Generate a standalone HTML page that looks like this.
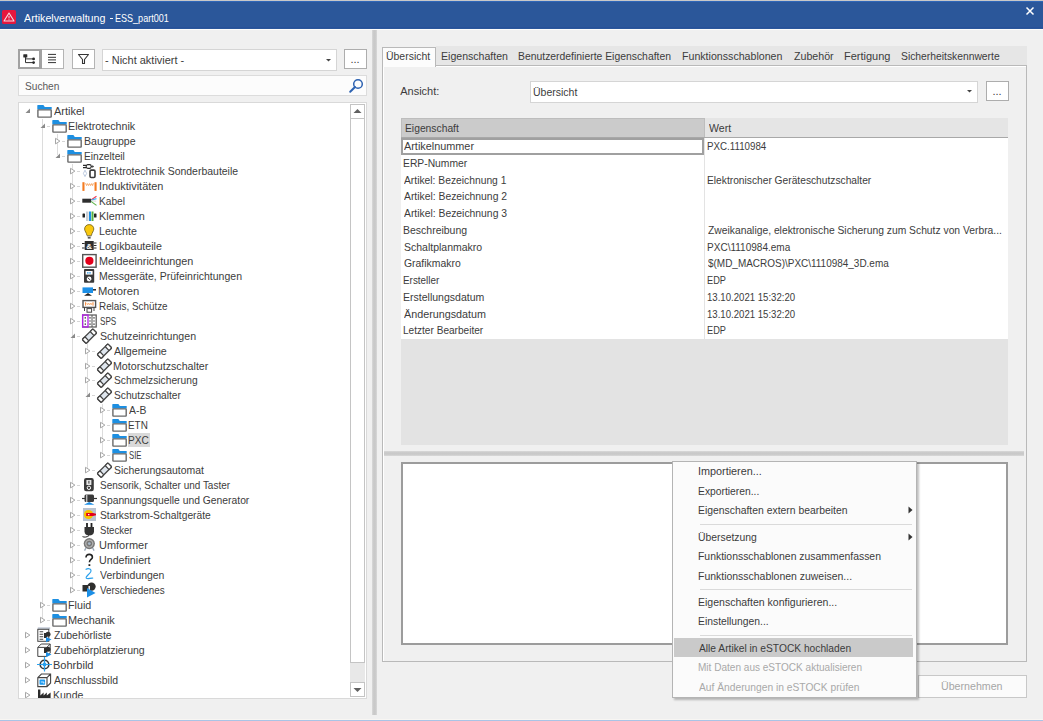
<!DOCTYPE html><html><head><meta charset="utf-8"><style>
*{margin:0;padding:0;box-sizing:border-box}
html,body{width:1043px;height:721px;overflow:hidden;background:#f0f0f0;font-family:"Liberation Sans",sans-serif}
.t{position:absolute;line-height:15px;height:15px;white-space:nowrap;font-size:11px}
svg{position:absolute;overflow:visible}
</style></head><body>
<div style="position:absolute;left:0px;top:0px;width:1043px;height:1px;background:#c8c8c8"></div>
<div style="position:absolute;left:0px;top:1px;width:1043px;height:28px;background:#2b579a"></div>
<div style="position:absolute;left:0px;top:1px;width:1043px;height:1px;background:#2f66b8"></div>
<div style="position:absolute;left:0px;top:27px;width:1043px;height:1px;background:#27519a"></div>
<div style="position:absolute;left:0px;top:29px;width:1043px;height:1px;background:#fdfcfa"></div>
<svg style="left:2px;top:10px" width="15" height="15" viewBox="0 0 15 15"><rect x="0" y="0" width="14" height="14" rx="1.5" fill="#e4173e"/><path d="M7 3 L12 11 L2 11 Z" fill="none" stroke="#f6dbe3" stroke-width="1.1" stroke-linejoin="round"/><path d="M7 5.8 V8.4" stroke="#f6dbe3" stroke-width="1"/><circle cx="7" cy="9.7" r="0.55" fill="#f6dbe3"/></svg>
<div class="t" style="left:23.7px;top:11px;color:#ffffff;letter-spacing:0.0px;font-size:11px;transform:scaleX(0.9726);transform-origin:0 0;">Artikelverwaltung</div>
<div style="position:absolute;left:110px;top:18px;width:2.5px;height:1px;background:#f4f6fa"></div>
<div class="t" style="left:114.88px;top:11px;color:#ffffff;letter-spacing:0.0px;font-size:11px;transform:scaleX(0.8219);transform-origin:0 0;">ESS_part001</div>
<svg style="left:1026px;top:7px" width="8" height="8" viewBox="0 0 8 8"><path d="M0.5 0.5 L7.5 7.5 M7.5 0.5 L0.5 7.5" stroke="#fff" stroke-width="1.5"/></svg>
<div style="position:absolute;left:18px;top:49px;width:24px;height:20px;background:#fff;border:2px solid #a2a2a2;border-right-width:3px"></div>
<svg style="left:22px;top:53px" width="16" height="12" viewBox="0 0 16 12"><rect x="1.3" y="1.2" width="4" height="3.2" rx="0.5" fill="#2a2a2a"/><path d="M3.5 4 V9.6 H11.5 M3.5 5.9 H11.5" stroke="#333" stroke-width="1" fill="none"/><circle cx="11.6" cy="5.9" r="1.4" fill="#2a2a2a"/><circle cx="11.6" cy="9.6" r="1.4" fill="#2a2a2a"/></svg>
<div style="position:absolute;left:42px;top:49px;width:22px;height:20px;background:#fff;border:1px solid #b4b4b4;border-left:none"></div>
<svg style="left:47px;top:53px" width="10" height="11" viewBox="0 0 10 11"><path d="M1 1.4H9M1 4.3H9M1 6.9H9M1 9.6H9" stroke="#333" stroke-width="1"/></svg>
<div style="position:absolute;left:72px;top:49px;width:23px;height:20px;background:#fff;border:1px solid #b4b4b4"></div>
<svg style="left:77px;top:53px" width="13" height="12" viewBox="0 0 13 12"><path d="M1.5 1.5 H11.5 L7.5 6.5 V10.5 H5.5 V6.5 Z" fill="none" stroke="#333" stroke-width="1.1" stroke-linejoin="round"/></svg>
<div style="position:absolute;left:102px;top:49px;width:235px;height:22px;background:#fff;border:1px solid #d5d5d5"></div>
<div class="t" style="left:105.0px;top:53px;color:#3c3c3c;letter-spacing:0.0px;font-size:11px;transform:scaleX(0.9975);transform-origin:0 0;">- Nicht aktiviert -</div>
<svg style="left:325.5px;top:59px" width="5" height="3" viewBox="0 0 5 3"><path d="M0 0 H5 L2.5 2.5Z" fill="#444"/></svg>
<div style="position:absolute;left:344px;top:49px;width:23px;height:20px;background:#fff;border:1px solid #adadad"></div>
<div class="t" style="left:350.5px;top:52px;color:#3c3c3c;letter-spacing:0px;font-size:11px;">...</div>
<div style="position:absolute;left:18px;top:75px;width:349px;height:21px;background:#fcfcfc;border:1px solid #dcdcdc"></div>
<div class="t" style="left:25.0px;top:78.5px;color:#5a5a5a;letter-spacing:0.0px;font-size:11px;transform:scaleX(0.9216);transform-origin:0 0;">Suchen</div>
<svg style="left:348px;top:78px" width="16" height="16" viewBox="0 0 16 16"><circle cx="10" cy="6" r="4.3" fill="none" stroke="#2d62b1" stroke-width="1.5"/><path d="M7 9 L2.2 13.8" stroke="#2d62b1" stroke-width="2" stroke-linecap="round"/></svg>
<div style="position:absolute;left:18px;top:102px;width:349px;height:597px;background:#fff;border:1px solid #d9d9d9"></div>
<div style="position:absolute;left:372px;top:30px;width:5px;height:685px;background:linear-gradient(to right,#d9d9d9,#c9c9c9 35%,#c9c9c9 65%,#d9d9d9)"></div>
<div style="position:absolute;left:377px;top:30px;width:4px;height:691px;background:#f0f0f0"></div>
<div style="position:absolute;left:42px;top:119px;width:1px;height:501px;background:#dcdcdc"></div>
<div style="position:absolute;left:57px;top:134px;width:1px;height:21px;background:#dcdcdc"></div>
<div style="position:absolute;left:72px;top:164px;width:1px;height:426px;background:#dcdcdc"></div>
<div style="position:absolute;left:87px;top:344px;width:1px;height:126px;background:#dcdcdc"></div>
<div style="position:absolute;left:102px;top:404px;width:1px;height:51px;background:#dcdcdc"></div>
<svg style="left:25px;top:108px" width="6" height="6" viewBox="0 0 6 6"><path d="M5 0.5 V5 H0.5 Z" fill="#8a8a8a"/></svg>
<svg style="left:37px;top:104px" width="15" height="15" viewBox="0 0 15 15"><path d="M0.3 1.6 Q0.3 1.1 0.9 1.1 H6.4 L7.8 3 H14.7 V5.4 H0.3 Z" fill="#1d8fe1"/><rect x="0.9" y="5.9" width="13.3" height="7.2" rx="0.4" fill="#fff" stroke="#6a6a6a" stroke-width="1.4"/></svg>
<div class="t" style="left:54.2px;top:104px;color:#3c3c3c;letter-spacing:0.0px;font-size:11px;transform:scaleX(0.9967);transform-origin:0 0;">Artikel</div>
<svg style="left:40px;top:123px" width="6" height="6" viewBox="0 0 6 6"><path d="M5 0.5 V5 H0.5 Z" fill="#8a8a8a"/></svg>
<div style="position:absolute;left:46.5px;top:126px;width:3px;height:1px;background:#d6d6d6"></div>
<svg style="left:52px;top:119px" width="15" height="15" viewBox="0 0 15 15"><path d="M0.3 1.6 Q0.3 1.1 0.9 1.1 H6.4 L7.8 3 H14.7 V5.4 H0.3 Z" fill="#1d8fe1"/><rect x="0.9" y="5.9" width="13.3" height="7.2" rx="0.4" fill="#fff" stroke="#6a6a6a" stroke-width="1.4"/></svg>
<div class="t" style="left:68.23px;top:119px;color:#3c3c3c;letter-spacing:0.0px;font-size:11px;transform:scaleX(0.9721);transform-origin:0 0;">Elektrotechnik</div>
<svg style="left:55px;top:137px" width="7" height="9" viewBox="0 0 7 9"><path d="M0.5 1.3 L4.9 4.1 L0.5 6.9 Z" fill="#fff" stroke="#a6a6a6" stroke-width="1" stroke-linejoin="round"/></svg>
<div style="position:absolute;left:61.5px;top:141px;width:3px;height:1px;background:#d6d6d6"></div>
<svg style="left:67px;top:134px" width="15" height="15" viewBox="0 0 15 15"><path d="M0.3 1.6 Q0.3 1.1 0.9 1.1 H6.4 L7.8 3 H14.7 V5.4 H0.3 Z" fill="#1d8fe1"/><rect x="0.9" y="5.9" width="13.3" height="7.2" rx="0.4" fill="#fff" stroke="#6a6a6a" stroke-width="1.4"/></svg>
<div class="t" style="left:83.54px;top:134px;color:#3c3c3c;letter-spacing:0.0px;font-size:11px;transform:scaleX(0.9585);transform-origin:0 0;">Baugruppe</div>
<svg style="left:55px;top:153px" width="6" height="6" viewBox="0 0 6 6"><path d="M5 0.5 V5 H0.5 Z" fill="#8a8a8a"/></svg>
<div style="position:absolute;left:61.5px;top:156px;width:3px;height:1px;background:#d6d6d6"></div>
<svg style="left:67px;top:149px" width="15" height="15" viewBox="0 0 15 15"><path d="M0.3 1.6 Q0.3 1.1 0.9 1.1 H6.4 L7.8 3 H14.7 V5.4 H0.3 Z" fill="#1d8fe1"/><rect x="0.9" y="5.9" width="13.3" height="7.2" rx="0.4" fill="#fff" stroke="#6a6a6a" stroke-width="1.4"/></svg>
<div class="t" style="left:83.57px;top:149px;color:#3c3c3c;letter-spacing:0.0px;font-size:11px;transform:scaleX(0.9279);transform-origin:0 0;">Einzelteil</div>
<svg style="left:70px;top:167px" width="7" height="9" viewBox="0 0 7 9"><path d="M0.5 1.3 L4.9 4.1 L0.5 6.9 Z" fill="#fff" stroke="#a6a6a6" stroke-width="1" stroke-linejoin="round"/></svg>
<div style="position:absolute;left:76.5px;top:171px;width:3px;height:1px;background:#d6d6d6"></div>
<svg style="left:82px;top:164px" width="15" height="15" viewBox="0 0 15 15"><rect x="4.2" y="0.6" width="5" height="3.8" rx="1.6" fill="none" stroke="#2a2a2a" stroke-width="1.1"/><path d="M1 1.4 H4.2 M1 3.6 H4.2 M9.2 2.5 H10.6" stroke="#2a2a2a" stroke-width="1.1"/><path d="M10.4 1 L12 2.5 L10.4 4 Z" fill="#2a2a2a"/><path d="M3 6.2 L4.6 9.4 L3 12.6 L1.4 9.4 Z" fill="none" stroke="#b4c4dc" stroke-width="0.9"/><rect x="8" y="6.1" width="5" height="7.4" rx="1.2" fill="#fff" stroke="#3a3a3a" stroke-width="1.6"/></svg>
<div class="t" style="left:98.55px;top:164px;color:#3c3c3c;letter-spacing:0.0px;font-size:11px;transform:scaleX(0.9517);transform-origin:0 0;">Elektrotechnik Sonderbauteile</div>
<svg style="left:70px;top:182px" width="7" height="9" viewBox="0 0 7 9"><path d="M0.5 1.3 L4.9 4.1 L0.5 6.9 Z" fill="#fff" stroke="#a6a6a6" stroke-width="1" stroke-linejoin="round"/></svg>
<div style="position:absolute;left:76.5px;top:186px;width:3px;height:1px;background:#d6d6d6"></div>
<svg style="left:82px;top:179px" width="15" height="15" viewBox="0 0 15 15"><rect x="0.4" y="3.2" width="2.1" height="8.7" fill="#f47b20"/><rect x="12.5" y="3.2" width="2.1" height="8.7" fill="#f47b20"/><path d="M3.6 4.2 L4.6 6.6 L5.6 4.6 L6.6 6.6 L7.6 4.6 L8.6 6.6 L9.6 4.6 L10.6 6.6 L11.4 4.2" fill="none" stroke="#f59a50" stroke-width="0.8"/></svg>
<div class="t" style="left:98.51px;top:179px;color:#3c3c3c;letter-spacing:0.0px;font-size:11px;transform:scaleX(0.9938);transform-origin:0 0;">Induktivitäten</div>
<svg style="left:70px;top:197px" width="7" height="9" viewBox="0 0 7 9"><path d="M0.5 1.3 L4.9 4.1 L0.5 6.9 Z" fill="#fff" stroke="#a6a6a6" stroke-width="1" stroke-linejoin="round"/></svg>
<div style="position:absolute;left:76.5px;top:201px;width:3px;height:1px;background:#d6d6d6"></div>
<svg style="left:82px;top:194px" width="15" height="15" viewBox="0 0 15 15"><rect x="0.3" y="4.7" width="8.7" height="4" fill="#2e2e2e"/><path d="M9 6 L14.5 2.2" stroke="#ee3a55" stroke-width="1.1"/><path d="M9 6.3 L14.5 4.6" stroke="#3fb4f4" stroke-width="1.1"/><path d="M9 6.8 L14.2 7.2" stroke="#d8d8d8" stroke-width="1"/><path d="M9 7.4 L14.5 11.4" stroke="#5cb54a" stroke-width="1.1"/></svg>
<div class="t" style="left:98.57px;top:194px;color:#3c3c3c;letter-spacing:0.0px;font-size:11px;transform:scaleX(0.9259);transform-origin:0 0;">Kabel</div>
<svg style="left:70px;top:212px" width="7" height="9" viewBox="0 0 7 9"><path d="M0.5 1.3 L4.9 4.1 L0.5 6.9 Z" fill="#fff" stroke="#a6a6a6" stroke-width="1" stroke-linejoin="round"/></svg>
<div style="position:absolute;left:76.5px;top:216px;width:3px;height:1px;background:#d6d6d6"></div>
<svg style="left:82px;top:209px" width="15" height="15" viewBox="0 0 15 15"><rect x="0.5" y="4.5" width="2.5" height="4" rx="0.6" fill="#222"/><rect x="12" y="4.5" width="2.5" height="4" rx="0.6" fill="#222"/><rect x="4" y="2.5" width="2.5" height="9.5" fill="#c9cfd6"/><rect x="7" y="2.5" width="2" height="9.5" fill="#1c8fe6"/><rect x="9.5" y="2.5" width="2" height="9.5" fill="#55b043"/></svg>
<div class="t" style="left:98.51px;top:209px;color:#3c3c3c;letter-spacing:0.0px;font-size:11px;transform:scaleX(0.9867);transform-origin:0 0;">Klemmen</div>
<svg style="left:70px;top:227px" width="7" height="9" viewBox="0 0 7 9"><path d="M0.5 1.3 L4.9 4.1 L0.5 6.9 Z" fill="#fff" stroke="#a6a6a6" stroke-width="1" stroke-linejoin="round"/></svg>
<div style="position:absolute;left:76.5px;top:231px;width:3px;height:1px;background:#d6d6d6"></div>
<svg style="left:82px;top:224px" width="15" height="15" viewBox="0 0 15 15"><path d="M7.2 0.6 C4.4 0.6 2.6 2.6 2.6 5 C2.6 7.2 4.6 8.6 5 11.6 H9.4 C9.8 8.6 11.8 7.2 11.8 5 C11.8 2.6 10 0.6 7.2 0.6 Z" fill="#f9c80e" stroke="#6b5a18" stroke-width="0.8"/><rect x="5.2" y="11.8" width="4" height="1.4" fill="#bbb"/><rect x="5.8" y="13.2" width="2.8" height="1.3" fill="#333"/></svg>
<div class="t" style="left:98.53px;top:224px;color:#3c3c3c;letter-spacing:0.0px;font-size:11px;transform:scaleX(0.9658);transform-origin:0 0;">Leuchte</div>
<svg style="left:70px;top:242px" width="7" height="9" viewBox="0 0 7 9"><path d="M0.5 1.3 L4.9 4.1 L0.5 6.9 Z" fill="#fff" stroke="#a6a6a6" stroke-width="1" stroke-linejoin="round"/></svg>
<div style="position:absolute;left:76.5px;top:246px;width:3px;height:1px;background:#d6d6d6"></div>
<svg style="left:82px;top:239px" width="15" height="15" viewBox="0 0 15 15"><rect x="2.7" y="2" width="9" height="9" fill="#2e2e2e"/><path d="M0 4.5H2.7M0 9H2.7M11.7 4H14.5M11.7 6.5H14.5M11.7 9H14.5" stroke="#2e2e2e" stroke-width="1"/><text x="7.2" y="9.6" font-size="8" font-family="Liberation Sans" fill="#fff" text-anchor="middle" font-weight="bold">&amp;</text></svg>
<div class="t" style="left:98.53px;top:239px;color:#3c3c3c;letter-spacing:0.0px;font-size:11px;transform:scaleX(0.9703);transform-origin:0 0;">Logikbauteile</div>
<svg style="left:70px;top:257px" width="7" height="9" viewBox="0 0 7 9"><path d="M0.5 1.3 L4.9 4.1 L0.5 6.9 Z" fill="#fff" stroke="#a6a6a6" stroke-width="1" stroke-linejoin="round"/></svg>
<div style="position:absolute;left:76.5px;top:261px;width:3px;height:1px;background:#d6d6d6"></div>
<svg style="left:82px;top:254px" width="15" height="15" viewBox="0 0 15 15"><rect x="0.7" y="0.6" width="13.4" height="12.6" fill="#fff" stroke="#555" stroke-width="1.4"/><circle cx="7.4" cy="6.8" r="4.1" fill="#e3001b"/></svg>
<div class="t" style="left:98.52px;top:254px;color:#3c3c3c;letter-spacing:0.0px;font-size:11px;transform:scaleX(0.9821);transform-origin:0 0;">Meldeeinrichtungen</div>
<svg style="left:70px;top:272px" width="7" height="9" viewBox="0 0 7 9"><path d="M0.5 1.3 L4.9 4.1 L0.5 6.9 Z" fill="#fff" stroke="#a6a6a6" stroke-width="1" stroke-linejoin="round"/></svg>
<div style="position:absolute;left:76.5px;top:276px;width:3px;height:1px;background:#d6d6d6"></div>
<svg style="left:82px;top:269px" width="15" height="15" viewBox="0 0 15 15"><rect x="2" y="0.1" width="10.2" height="13.6" rx="0.8" fill="#3a3a3a"/><rect x="3.6" y="2" width="7" height="3.6" fill="#fff"/><path d="M5 3.8 H9.2" stroke="#2a9ae8" stroke-width="1.2" stroke-dasharray="1.6 0.6"/><circle cx="7.1" cy="10" r="2.4" fill="#fff"/><path d="M5.6 8.6 L8.6 11.4" stroke="#3a3a3a" stroke-width="0.9"/></svg>
<div class="t" style="left:98.55px;top:269px;color:#3c3c3c;letter-spacing:0.0px;font-size:11px;transform:scaleX(0.9544);transform-origin:0 0;">Messgeräte, Prüfeinrichtungen</div>
<svg style="left:70px;top:287px" width="7" height="9" viewBox="0 0 7 9"><path d="M0.5 1.3 L4.9 4.1 L0.5 6.9 Z" fill="#fff" stroke="#a6a6a6" stroke-width="1" stroke-linejoin="round"/></svg>
<div style="position:absolute;left:76.5px;top:291px;width:3px;height:1px;background:#d6d6d6"></div>
<svg style="left:82px;top:284px" width="15" height="15" viewBox="0 0 15 15"><rect x="0.5" y="3.4" width="10.5" height="5.6" fill="#1c8fe6"/><path d="M11 5.8 H14" stroke="#222" stroke-width="1.5"/><path d="M6 9 L2 11.7 H10 Z" fill="#222"/></svg>
<div class="t" style="left:98.48px;top:284px;color:#3c3c3c;letter-spacing:0.0px;font-size:11px;transform:scaleX(1.0205);transform-origin:0 0;">Motoren</div>
<svg style="left:70px;top:302px" width="7" height="9" viewBox="0 0 7 9"><path d="M0.5 1.3 L4.9 4.1 L0.5 6.9 Z" fill="#fff" stroke="#a6a6a6" stroke-width="1" stroke-linejoin="round"/></svg>
<div style="position:absolute;left:76.5px;top:306px;width:3px;height:1px;background:#d6d6d6"></div>
<svg style="left:82px;top:299px" width="15" height="15" viewBox="0 0 15 15"><rect x="1" y="1.6" width="12.6" height="6.8" fill="#fff" stroke="#555" stroke-width="1.4"/><path d="M3.6 3.2 V6.6 M11 3.2 V6.6" stroke="#f47b20" stroke-width="0.9"/><path d="M4.8 4 L5.6 5.8 L6.6 4.2 L7.4 5.8 L8.4 4.2 L9.2 5.8 L10 4" fill="none" stroke="#f59a50" stroke-width="0.7"/><path d="M2.5 8.4 V12 M12 8.4 V12" stroke="#444" stroke-width="1"/><rect x="5" y="9.6" width="4.6" height="3.6" fill="#fff" stroke="#444" stroke-width="1"/></svg>
<div class="t" style="left:98.6px;top:299px;color:#3c3c3c;letter-spacing:0.0px;font-size:11px;transform:scaleX(0.8973);transform-origin:0 0;">Relais, Schütze</div>
<svg style="left:70px;top:317px" width="7" height="9" viewBox="0 0 7 9"><path d="M0.5 1.3 L4.9 4.1 L0.5 6.9 Z" fill="#fff" stroke="#a6a6a6" stroke-width="1" stroke-linejoin="round"/></svg>
<div style="position:absolute;left:76.5px;top:321px;width:3px;height:1px;background:#d6d6d6"></div>
<svg style="left:82px;top:314px" width="15" height="15" viewBox="0 0 15 15"><rect x="0.6" y="1" width="13.6" height="12" fill="#fff" stroke="#555" stroke-width="1.2"/><rect x="0.6" y="1" width="5.4" height="12" fill="none" stroke="#b41ee8" stroke-width="1.3"/><path d="M10 1 V13" stroke="#555" stroke-width="1"/><path d="M3.3 3.2V4.4M3.3 6.4V7.6M3.3 9.6V10.8M8 3.2V4.4M8 6.4V7.6M8 9.6V10.8M12 3.2V4.4M12 6.4V7.6M12 9.6V10.8" stroke="#333" stroke-width="1.4"/></svg>
<div class="t" style="left:99.5px;top:314px;color:#3c3c3c;letter-spacing:0.0px;font-size:11px;transform:scaleX(0.7409);transform-origin:0 0;">SPS</div>
<svg style="left:70px;top:333px" width="6" height="6" viewBox="0 0 6 6"><path d="M5 0.5 V5 H0.5 Z" fill="#8a8a8a"/></svg>
<div style="position:absolute;left:76.5px;top:336px;width:3px;height:1px;background:#d6d6d6"></div>
<svg style="left:82px;top:329px" width="15" height="15" viewBox="0 0 15 15"><g transform="rotate(-45 7.5 7.2)"><rect x="0" y="4.4" width="15" height="5.6" rx="1" fill="#dfe6ee" stroke="#444" stroke-width="1.3"/><rect x="0" y="4.4" width="3.8" height="5.6" rx="1" fill="#fff" stroke="#444" stroke-width="1.3"/><rect x="11.2" y="4.4" width="3.8" height="5.6" rx="1" fill="#fff" stroke="#444" stroke-width="1.3"/></g></svg>
<div class="t" style="left:99.5px;top:329px;color:#3c3c3c;letter-spacing:0.0px;font-size:11px;transform:scaleX(0.9636);transform-origin:0 0;">Schutzeinrichtungen</div>
<svg style="left:85px;top:347px" width="7" height="9" viewBox="0 0 7 9"><path d="M0.5 1.3 L4.9 4.1 L0.5 6.9 Z" fill="#fff" stroke="#a6a6a6" stroke-width="1" stroke-linejoin="round"/></svg>
<div style="position:absolute;left:91.5px;top:351px;width:3px;height:1px;background:#d6d6d6"></div>
<svg style="left:97px;top:344px" width="15" height="15" viewBox="0 0 15 15"><g transform="rotate(-45 7.5 7.2)"><rect x="0" y="4.4" width="15" height="5.6" rx="1" fill="#dfe6ee" stroke="#444" stroke-width="1.3"/><rect x="0" y="4.4" width="3.8" height="5.6" rx="1" fill="#fff" stroke="#444" stroke-width="1.3"/><rect x="11.2" y="4.4" width="3.8" height="5.6" rx="1" fill="#fff" stroke="#444" stroke-width="1.3"/></g></svg>
<div class="t" style="left:114.3px;top:344px;color:#3c3c3c;letter-spacing:0.0px;font-size:11px;transform:scaleX(0.9704);transform-origin:0 0;">Allgemeine</div>
<svg style="left:85px;top:362px" width="7" height="9" viewBox="0 0 7 9"><path d="M0.5 1.3 L4.9 4.1 L0.5 6.9 Z" fill="#fff" stroke="#a6a6a6" stroke-width="1" stroke-linejoin="round"/></svg>
<div style="position:absolute;left:91.5px;top:366px;width:3px;height:1px;background:#d6d6d6"></div>
<svg style="left:97px;top:359px" width="15" height="15" viewBox="0 0 15 15"><g transform="rotate(-45 7.5 7.2)"><rect x="0" y="4.4" width="15" height="5.6" rx="1" fill="#dfe6ee" stroke="#444" stroke-width="1.3"/><rect x="0" y="4.4" width="3.8" height="5.6" rx="1" fill="#fff" stroke="#444" stroke-width="1.3"/><rect x="11.2" y="4.4" width="3.8" height="5.6" rx="1" fill="#fff" stroke="#444" stroke-width="1.3"/></g></svg>
<div class="t" style="left:113.33px;top:359px;color:#3c3c3c;letter-spacing:0.0px;font-size:11px;transform:scaleX(0.9684);transform-origin:0 0;">Motorschutzschalter</div>
<svg style="left:85px;top:376px" width="7" height="9" viewBox="0 0 7 9"><path d="M0.5 1.3 L4.9 4.1 L0.5 6.9 Z" fill="#fff" stroke="#a6a6a6" stroke-width="1" stroke-linejoin="round"/></svg>
<div style="position:absolute;left:91.5px;top:380px;width:3px;height:1px;background:#d6d6d6"></div>
<svg style="left:97px;top:373px" width="15" height="15" viewBox="0 0 15 15"><g transform="rotate(-45 7.5 7.2)"><rect x="0" y="4.4" width="15" height="5.6" rx="1" fill="#dfe6ee" stroke="#444" stroke-width="1.3"/><rect x="0" y="4.4" width="3.8" height="5.6" rx="1" fill="#fff" stroke="#444" stroke-width="1.3"/><rect x="11.2" y="4.4" width="3.8" height="5.6" rx="1" fill="#fff" stroke="#444" stroke-width="1.3"/></g></svg>
<div class="t" style="left:114.3px;top:373px;color:#3c3c3c;letter-spacing:0.0px;font-size:11px;transform:scaleX(0.93);transform-origin:0 0;">Schmelzsicherung</div>
<svg style="left:85px;top:392px" width="6" height="6" viewBox="0 0 6 6"><path d="M5 0.5 V5 H0.5 Z" fill="#8a8a8a"/></svg>
<div style="position:absolute;left:91.5px;top:395px;width:3px;height:1px;background:#d6d6d6"></div>
<svg style="left:97px;top:388px" width="15" height="15" viewBox="0 0 15 15"><g transform="rotate(-45 7.5 7.2)"><rect x="0" y="4.4" width="15" height="5.6" rx="1" fill="#dfe6ee" stroke="#444" stroke-width="1.3"/><rect x="0" y="4.4" width="3.8" height="5.6" rx="1" fill="#fff" stroke="#444" stroke-width="1.3"/><rect x="11.2" y="4.4" width="3.8" height="5.6" rx="1" fill="#fff" stroke="#444" stroke-width="1.3"/></g></svg>
<div class="t" style="left:114.3px;top:388px;color:#3c3c3c;letter-spacing:0.0px;font-size:11px;transform:scaleX(0.9278);transform-origin:0 0;">Schutzschalter</div>
<svg style="left:100px;top:406px" width="7" height="9" viewBox="0 0 7 9"><path d="M0.5 1.3 L4.9 4.1 L0.5 6.9 Z" fill="#fff" stroke="#a6a6a6" stroke-width="1" stroke-linejoin="round"/></svg>
<div style="position:absolute;left:106.5px;top:410px;width:3px;height:1px;background:#d6d6d6"></div>
<svg style="left:112px;top:403px" width="15" height="15" viewBox="0 0 15 15"><path d="M0.3 1.6 Q0.3 1.1 0.9 1.1 H6.4 L7.8 3 H14.7 V5.4 H0.3 Z" fill="#1d8fe1"/><rect x="0.9" y="5.9" width="13.3" height="7.2" rx="0.4" fill="#fff" stroke="#6a6a6a" stroke-width="1.4"/></svg>
<div class="t" style="left:129.1px;top:403px;color:#3c3c3c;letter-spacing:0.0px;font-size:11px;transform:scaleX(0.9444);transform-origin:0 0;">A-B</div>
<svg style="left:100px;top:421px" width="7" height="9" viewBox="0 0 7 9"><path d="M0.5 1.3 L4.9 4.1 L0.5 6.9 Z" fill="#fff" stroke="#a6a6a6" stroke-width="1" stroke-linejoin="round"/></svg>
<div style="position:absolute;left:106.5px;top:425px;width:3px;height:1px;background:#d6d6d6"></div>
<svg style="left:112px;top:418px" width="15" height="15" viewBox="0 0 15 15"><path d="M0.3 1.6 Q0.3 1.1 0.9 1.1 H6.4 L7.8 3 H14.7 V5.4 H0.3 Z" fill="#1d8fe1"/><rect x="0.9" y="5.9" width="13.3" height="7.2" rx="0.4" fill="#fff" stroke="#6a6a6a" stroke-width="1.4"/></svg>
<div class="t" style="left:128.2px;top:418px;color:#3c3c3c;letter-spacing:0.0px;font-size:11px;transform:scaleX(0.9);transform-origin:0 0;">ETN</div>
<svg style="left:100px;top:436px" width="7" height="9" viewBox="0 0 7 9"><path d="M0.5 1.3 L4.9 4.1 L0.5 6.9 Z" fill="#fff" stroke="#a6a6a6" stroke-width="1" stroke-linejoin="round"/></svg>
<div style="position:absolute;left:106.5px;top:440px;width:3px;height:1px;background:#d6d6d6"></div>
<svg style="left:112px;top:433px" width="15" height="15" viewBox="0 0 15 15"><path d="M0.3 1.6 Q0.3 1.1 0.9 1.1 H6.4 L7.8 3 H14.7 V5.4 H0.3 Z" fill="#1d8fe1"/><rect x="0.9" y="5.9" width="13.3" height="7.2" rx="0.4" fill="#fff" stroke="#6a6a6a" stroke-width="1.4"/></svg>
<div style="position:absolute;left:127.5px;top:433px;width:22px;height:14px;background:#d9d9d9"></div>
<div class="t" style="left:128.18px;top:433px;color:#3c3c3c;letter-spacing:0.0px;font-size:11px;transform:scaleX(0.919);transform-origin:0 0;">PXC</div>
<svg style="left:100px;top:451px" width="7" height="9" viewBox="0 0 7 9"><path d="M0.5 1.3 L4.9 4.1 L0.5 6.9 Z" fill="#fff" stroke="#a6a6a6" stroke-width="1" stroke-linejoin="round"/></svg>
<div style="position:absolute;left:106.5px;top:455px;width:3px;height:1px;background:#d6d6d6"></div>
<svg style="left:112px;top:448px" width="15" height="15" viewBox="0 0 15 15"><path d="M0.3 1.6 Q0.3 1.1 0.9 1.1 H6.4 L7.8 3 H14.7 V5.4 H0.3 Z" fill="#1d8fe1"/><rect x="0.9" y="5.9" width="13.3" height="7.2" rx="0.4" fill="#fff" stroke="#6a6a6a" stroke-width="1.4"/></svg>
<div class="t" style="left:129.1px;top:448px;color:#3c3c3c;letter-spacing:0.0px;font-size:11px;transform:scaleX(0.7056);transform-origin:0 0;">SIE</div>
<svg style="left:85px;top:466px" width="7" height="9" viewBox="0 0 7 9"><path d="M0.5 1.3 L4.9 4.1 L0.5 6.9 Z" fill="#fff" stroke="#a6a6a6" stroke-width="1" stroke-linejoin="round"/></svg>
<div style="position:absolute;left:91.5px;top:470px;width:3px;height:1px;background:#d6d6d6"></div>
<svg style="left:97px;top:463px" width="15" height="15" viewBox="0 0 15 15"><g transform="rotate(-45 7.5 7.2)"><rect x="0" y="4.4" width="15" height="5.6" rx="1" fill="#dfe6ee" stroke="#444" stroke-width="1.3"/><rect x="0" y="4.4" width="3.8" height="5.6" rx="1" fill="#fff" stroke="#444" stroke-width="1.3"/><rect x="11.2" y="4.4" width="3.8" height="5.6" rx="1" fill="#fff" stroke="#444" stroke-width="1.3"/></g></svg>
<div class="t" style="left:114.3px;top:463px;color:#3c3c3c;letter-spacing:0.0px;font-size:11px;transform:scaleX(0.9495);transform-origin:0 0;">Sicherungsautomat</div>
<svg style="left:70px;top:481px" width="7" height="9" viewBox="0 0 7 9"><path d="M0.5 1.3 L4.9 4.1 L0.5 6.9 Z" fill="#fff" stroke="#a6a6a6" stroke-width="1" stroke-linejoin="round"/></svg>
<div style="position:absolute;left:76.5px;top:485px;width:3px;height:1px;background:#d6d6d6"></div>
<svg style="left:82px;top:478px" width="15" height="15" viewBox="0 0 15 15"><rect x="2" y="0" width="9.8" height="13.2" rx="2.2" fill="#3a3a3a"/><rect x="4.4" y="2" width="5" height="5" fill="#e6e6e6"/><rect x="6.3" y="2.8" width="1.2" height="2.8" fill="#555"/><circle cx="6.9" cy="9.8" r="1.7" fill="none" stroke="#fff" stroke-width="1"/></svg>
<div class="t" style="left:99.5px;top:478px;color:#3c3c3c;letter-spacing:0.0px;font-size:11px;transform:scaleX(0.9062);transform-origin:0 0;">Sensorik, Schalter und Taster</div>
<svg style="left:70px;top:496px" width="7" height="9" viewBox="0 0 7 9"><path d="M0.5 1.3 L4.9 4.1 L0.5 6.9 Z" fill="#fff" stroke="#a6a6a6" stroke-width="1" stroke-linejoin="round"/></svg>
<div style="position:absolute;left:76.5px;top:500px;width:3px;height:1px;background:#d6d6d6"></div>
<svg style="left:82px;top:493px" width="15" height="15" viewBox="0 0 15 15"><path d="M0 5.5 H15" stroke="#333" stroke-width="1.2"/><rect x="2.5" y="1.5" width="9.5" height="7.5" rx="1.5" fill="#3a3a3a"/><rect x="4" y="1.5" width="1.4" height="7.5" fill="#bbb"/><path d="M7.2 9 L2 11.8 H12.4 Z" fill="#1c8fe6"/></svg>
<div class="t" style="left:99.5px;top:493px;color:#3c3c3c;letter-spacing:0.0px;font-size:11px;transform:scaleX(0.939);transform-origin:0 0;">Spannungsquelle und Generator</div>
<svg style="left:70px;top:511px" width="7" height="9" viewBox="0 0 7 9"><path d="M0.5 1.3 L4.9 4.1 L0.5 6.9 Z" fill="#fff" stroke="#a6a6a6" stroke-width="1" stroke-linejoin="round"/></svg>
<div style="position:absolute;left:76.5px;top:515px;width:3px;height:1px;background:#d6d6d6"></div>
<svg style="left:82px;top:508px" width="15" height="15" viewBox="0 0 15 15"><rect x="1" y="0" width="13" height="13" fill="#b9c3d0"/><circle cx="6.5" cy="6.5" r="4.6" fill="#f7c300"/><path d="M4.2 5 H11 L14 5.8 V7.2 L11 8 H4.2 Z" fill="#e3001b"/><rect x="6" y="6" width="1.4" height="1.2" fill="#fff"/></svg>
<div class="t" style="left:99.5px;top:508px;color:#3c3c3c;letter-spacing:0.0px;font-size:11px;transform:scaleX(0.9345);transform-origin:0 0;">Starkstrom-Schaltgeräte</div>
<svg style="left:70px;top:526px" width="7" height="9" viewBox="0 0 7 9"><path d="M0.5 1.3 L4.9 4.1 L0.5 6.9 Z" fill="#fff" stroke="#a6a6a6" stroke-width="1" stroke-linejoin="round"/></svg>
<div style="position:absolute;left:76.5px;top:530px;width:3px;height:1px;background:#d6d6d6"></div>
<svg style="left:82px;top:523px" width="15" height="15" viewBox="0 0 15 15"><path d="M5 0 V4 M9.5 0 V4" stroke="#222" stroke-width="1.8"/><path d="M2.5 4 H12 V8.5 C12 11 10 12.5 7.2 12.5 C4.5 12.5 2.5 11 2.5 8.5 Z" fill="#333"/><path d="M7 12.5 C5.5 14.2 2 14.5 0.5 13.6" fill="none" stroke="#222" stroke-width="1"/></svg>
<div class="t" style="left:99.5px;top:523px;color:#3c3c3c;letter-spacing:0.0px;font-size:11px;transform:scaleX(0.8711);transform-origin:0 0;">Stecker</div>
<svg style="left:70px;top:541px" width="7" height="9" viewBox="0 0 7 9"><path d="M0.5 1.3 L4.9 4.1 L0.5 6.9 Z" fill="#fff" stroke="#a6a6a6" stroke-width="1" stroke-linejoin="round"/></svg>
<div style="position:absolute;left:76.5px;top:545px;width:3px;height:1px;background:#d6d6d6"></div>
<svg style="left:82px;top:538px" width="15" height="15" viewBox="0 0 15 15"><circle cx="7.3" cy="5.6" r="5.6" fill="#777"/><circle cx="7.3" cy="5.6" r="4.2" fill="#b0b0b0"/><circle cx="7.3" cy="5.6" r="2.8" fill="#777"/><circle cx="7.3" cy="5.6" r="1.4" fill="#a8b8c8"/><path d="M4 10 L2.5 12.6 M10.6 10 L12.1 12.6" stroke="#9aa8b8" stroke-width="1.4"/></svg>
<div class="t" style="left:98.5px;top:538px;color:#3c3c3c;letter-spacing:0.0px;font-size:11px;transform:scaleX(0.9979);transform-origin:0 0;">Umformer</div>
<svg style="left:70px;top:556px" width="7" height="9" viewBox="0 0 7 9"><path d="M0.5 1.3 L4.9 4.1 L0.5 6.9 Z" fill="#fff" stroke="#a6a6a6" stroke-width="1" stroke-linejoin="round"/></svg>
<div style="position:absolute;left:76.5px;top:560px;width:3px;height:1px;background:#d6d6d6"></div>
<svg style="left:82px;top:553px" width="15" height="15" viewBox="0 0 15 15"><path d="M4 4.6 C4 2.4 5.4 1.4 7.2 1.4 C9.2 1.4 10.4 2.6 10.4 4.2 C10.4 6.4 7.4 6.6 7.4 9.2" fill="none" stroke="#222" stroke-width="1.6"/><rect x="6.5" y="11.2" width="1.8" height="1.8" fill="#222"/></svg>
<div class="t" style="left:98.53px;top:553px;color:#3c3c3c;letter-spacing:0.0px;font-size:11px;transform:scaleX(0.9698);transform-origin:0 0;">Undefiniert</div>
<svg style="left:70px;top:571px" width="7" height="9" viewBox="0 0 7 9"><path d="M0.5 1.3 L4.9 4.1 L0.5 6.9 Z" fill="#fff" stroke="#a6a6a6" stroke-width="1" stroke-linejoin="round"/></svg>
<div style="position:absolute;left:76.5px;top:575px;width:3px;height:1px;background:#d6d6d6"></div>
<svg style="left:82px;top:568px" width="15" height="15" viewBox="0 0 15 15"><path d="M3.6 1.6 C6.5 -0.2 10.2 1 8.6 4 C7 6.5 3.6 8.6 4.2 10 C4.8 11.2 8.6 10.4 11.2 10" fill="none" stroke="#2aa0ec" stroke-width="1.2"/></svg>
<div class="t" style="left:99.5px;top:568px;color:#3c3c3c;letter-spacing:0.0px;font-size:11px;transform:scaleX(0.9485);transform-origin:0 0;">Verbindungen</div>
<svg style="left:70px;top:586px" width="7" height="9" viewBox="0 0 7 9"><path d="M0.5 1.3 L4.9 4.1 L0.5 6.9 Z" fill="#fff" stroke="#a6a6a6" stroke-width="1" stroke-linejoin="round"/></svg>
<div style="position:absolute;left:76.5px;top:590px;width:3px;height:1px;background:#d6d6d6"></div>
<svg style="left:82px;top:583px" width="15" height="15" viewBox="0 0 15 15"><rect x="0.5" y="2" width="6" height="6.5" fill="#2e2e2e"/><circle cx="9.5" cy="3.6" r="4.2" fill="#2e2e2e"/><rect x="6.5" y="3" width="1.4" height="5.5" fill="#fff"/><path d="M5 5 L13.5 10 L5 14.5 Z" fill="#1c8fe6"/></svg>
<div class="t" style="left:99.5px;top:583px;color:#3c3c3c;letter-spacing:0.0px;font-size:11px;transform:scaleX(0.8958);transform-origin:0 0;">Verschiedenes</div>
<svg style="left:40px;top:601px" width="7" height="9" viewBox="0 0 7 9"><path d="M0.5 1.3 L4.9 4.1 L0.5 6.9 Z" fill="#fff" stroke="#a6a6a6" stroke-width="1" stroke-linejoin="round"/></svg>
<div style="position:absolute;left:46.5px;top:605px;width:3px;height:1px;background:#d6d6d6"></div>
<svg style="left:52px;top:598px" width="15" height="15" viewBox="0 0 15 15"><path d="M0.3 1.6 Q0.3 1.1 0.9 1.1 H6.4 L7.8 3 H14.7 V5.4 H0.3 Z" fill="#1d8fe1"/><rect x="0.9" y="5.9" width="13.3" height="7.2" rx="0.4" fill="#fff" stroke="#6a6a6a" stroke-width="1.4"/></svg>
<div class="t" style="left:68.23px;top:598px;color:#3c3c3c;letter-spacing:0.0px;font-size:11px;transform:scaleX(0.9739);transform-origin:0 0;">Fluid</div>
<svg style="left:40px;top:616px" width="7" height="9" viewBox="0 0 7 9"><path d="M0.5 1.3 L4.9 4.1 L0.5 6.9 Z" fill="#fff" stroke="#a6a6a6" stroke-width="1" stroke-linejoin="round"/></svg>
<div style="position:absolute;left:46.5px;top:620px;width:3px;height:1px;background:#d6d6d6"></div>
<svg style="left:52px;top:613px" width="15" height="15" viewBox="0 0 15 15"><path d="M0.3 1.6 Q0.3 1.1 0.9 1.1 H6.4 L7.8 3 H14.7 V5.4 H0.3 Z" fill="#1d8fe1"/><rect x="0.9" y="5.9" width="13.3" height="7.2" rx="0.4" fill="#fff" stroke="#6a6a6a" stroke-width="1.4"/></svg>
<div class="t" style="left:68.21px;top:613px;color:#3c3c3c;letter-spacing:0.0px;font-size:11px;transform:scaleX(0.9935);transform-origin:0 0;">Mechanik</div>
<svg style="left:25px;top:631px" width="7" height="9" viewBox="0 0 7 9"><path d="M0.5 1.3 L4.9 4.1 L0.5 6.9 Z" fill="#fff" stroke="#a6a6a6" stroke-width="1" stroke-linejoin="round"/></svg>
<svg style="left:37px;top:628px" width="15" height="15" viewBox="0 0 15 15"><rect x="0.8" y="-0.7" width="12.4" height="2" fill="#c0c8d4"/><rect x="0.8" y="1.3" width="11" height="12" fill="#fff" stroke="#444" stroke-width="1"/><path d="M2.6 3.8H6.2M2.6 6.3H6.2M2.6 8.8H6.2M2.6 11.3H6.2" stroke="#444" stroke-width="1.1"/><rect x="7" y="5" width="3" height="5" fill="#2e2e2e"/><circle cx="11" cy="6.2" r="2.5" fill="#2e2e2e"/><path d="M9 9 L14.5 11.5 L9 14.2 Z" fill="#1c8fe6"/></svg>
<div class="t" style="left:54.2px;top:628px;color:#3c3c3c;letter-spacing:0.0px;font-size:11px;transform:scaleX(0.9525);transform-origin:0 0;">Zubehörliste</div>
<svg style="left:25px;top:646px" width="7" height="9" viewBox="0 0 7 9"><path d="M0.5 1.3 L4.9 4.1 L0.5 6.9 Z" fill="#fff" stroke="#a6a6a6" stroke-width="1" stroke-linejoin="round"/></svg>
<svg style="left:37px;top:643px" width="15" height="15" viewBox="0 0 15 15"><path d="M0.8 4.4 L4.2 1 H13.2 V10 L9.8 13.4 H0.8 Z M0.8 4.4 H9.8 V13.4 M9.8 4.4 L13.2 1" fill="#fff" stroke="#444" stroke-width="1"/><rect x="7" y="5" width="3" height="5" fill="#2e2e2e"/><circle cx="11" cy="6.2" r="2.5" fill="#2e2e2e"/><path d="M9 9 L14.5 11.5 L9 14.2 Z" fill="#1c8fe6"/></svg>
<div class="t" style="left:54.2px;top:643px;color:#3c3c3c;letter-spacing:0.0px;font-size:11px;transform:scaleX(0.9568);transform-origin:0 0;">Zubehörplatzierung</div>
<svg style="left:25px;top:661px" width="7" height="9" viewBox="0 0 7 9"><path d="M0.5 1.3 L4.9 4.1 L0.5 6.9 Z" fill="#fff" stroke="#a6a6a6" stroke-width="1" stroke-linejoin="round"/></svg>
<svg style="left:37px;top:658px" width="15" height="15" viewBox="0 0 15 15"><circle cx="7.5" cy="6.5" r="4.3" fill="none" stroke="#333" stroke-width="1.6"/><path d="M7.5 -1 V13.5 M0 6.5 H15" stroke="#2aa0ec" stroke-width="1.2"/><circle cx="7.5" cy="6.5" r="2" fill="#2aa0ec"/></svg>
<div class="t" style="left:53.2px;top:658px;color:#3c3c3c;letter-spacing:0.0px;font-size:11px;transform:scaleX(1.0026);transform-origin:0 0;">Bohrbild</div>
<svg style="left:25px;top:676px" width="7" height="9" viewBox="0 0 7 9"><path d="M0.5 1.3 L4.9 4.1 L0.5 6.9 Z" fill="#fff" stroke="#a6a6a6" stroke-width="1" stroke-linejoin="round"/></svg>
<svg style="left:37px;top:673px" width="15" height="15" viewBox="0 0 15 15"><path d="M0.8 4.6 L4.4 1 H13.6 V10 L10 13.6 H0.8 Z M0.8 4.6 H10 V13.6 M10 4.6 L13.6 1" fill="#fff" stroke="#444" stroke-width="1.1"/><rect x="2.5" y="6.6" width="5.6" height="5.2" rx="0.8" fill="#1c9af0"/><path d="M3.8 9 H6.8 V10.6" stroke="#fff" stroke-width="0.8" fill="none"/></svg>
<div class="t" style="left:54.2px;top:673px;color:#3c3c3c;letter-spacing:0.0px;font-size:11px;transform:scaleX(0.9522);transform-origin:0 0;">Anschlussbild</div>
<svg style="left:25px;top:691px" width="7" height="9" viewBox="0 0 7 9"><path d="M0.5 1.3 L4.9 4.1 L0.5 6.9 Z" fill="#fff" stroke="#a6a6a6" stroke-width="1" stroke-linejoin="round"/></svg>
<svg style="left:37px;top:688px" width="15" height="15" viewBox="0 0 15 15"><path d="M1 14 V1.5 H3.4 V7.5 L6.6 4.6 V7.5 L9.8 4.6 V7.5 L13.6 4.6 V14 Z" fill="#2b2b2b"/></svg>
<div class="t" style="left:53.25px;top:688px;color:#3c3c3c;letter-spacing:0.0px;font-size:11px;transform:scaleX(0.9548);transform-origin:0 0;">Kunde</div>
<div style="position:absolute;left:18px;top:698px;width:349px;height:23px;background:#f0f0f0"></div>
<div style="position:absolute;left:18px;top:698px;width:349px;height:1px;background:#d9d9d9"></div>
<div style="position:absolute;left:350px;top:104px;width:15px;height:15px;background:#fff;border:1px solid #c4c4c4"></div>
<svg style="left:353px;top:108px" width="9" height="6" viewBox="0 0 9 6"><path d="M0.5 5 L4.5 1 L8.5 5 Z" fill="#606060"/></svg>
<div style="position:absolute;left:350px;top:118px;width:15px;height:545px;background:#fff;border:1px solid #c4c4c4"></div>
<div style="position:absolute;left:350px;top:663px;width:15px;height:19px;background:#e8e8e8"></div>
<div style="position:absolute;left:350px;top:682px;width:15px;height:15px;background:#fff;border:1px solid #c4c4c4"></div>
<svg style="left:353px;top:687px" width="9" height="6" viewBox="0 0 9 6"><path d="M0.5 1 L4.5 5 L8.5 1 Z" fill="#606060"/></svg>
<div style="position:absolute;left:436px;top:46px;width:591px;height:20px;background:#e6e6e6"></div>
<div style="position:absolute;left:382px;top:65px;width:645px;height:597px;background:#f0f0f0;border:1px solid #b9b9b9;box-shadow:inset 1px 1px 0 #fff"></div>
<div style="position:absolute;left:382px;top:47px;width:54px;height:20px;background:#fcfcfc;border:1px solid #b9b9b9;border-bottom:none"></div>
<div class="t" style="left:386.25px;top:48.5px;color:#3c3c3c;letter-spacing:0.0px;font-size:11px;transform:scaleX(0.95);transform-origin:0 0;">Übersicht</div>
<div class="t" style="left:441.44px;top:48.5px;color:#3c3c3c;letter-spacing:0.0px;font-size:11px;transform:scaleX(0.9603);transform-origin:0 0;">Eigenschaften</div>
<div class="t" style="left:518.36px;top:48.5px;color:#3c3c3c;letter-spacing:0.0px;font-size:11px;transform:scaleX(0.9441);transform-origin:0 0;">Benutzerdefinierte Eigenschaften</div>
<div class="t" style="left:682.03px;top:48.5px;color:#3c3c3c;letter-spacing:0.0px;font-size:11px;transform:scaleX(0.966);transform-origin:0 0;">Funktionsschablonen</div>
<div class="t" style="left:793.9px;top:48.5px;color:#3c3c3c;letter-spacing:0.0px;font-size:11px;transform:scaleX(0.9683);transform-origin:0 0;">Zubehör</div>
<div class="t" style="left:844.0px;top:48.5px;color:#3c3c3c;letter-spacing:0.0px;font-size:11px;transform:scaleX(1.0);transform-origin:0 0;">Fertigung</div>
<div class="t" style="left:901.4px;top:48.5px;color:#3c3c3c;letter-spacing:0.0px;font-size:11px;transform:scaleX(0.9381);transform-origin:0 0;">Sicherheitskennwerte</div>
<div class="t" style="left:400.2px;top:83.8px;color:#3c3c3c;letter-spacing:0.0px;font-size:11px;transform:scaleX(1.0);transform-origin:0 0;">Ansicht:</div>
<div style="position:absolute;left:530px;top:81px;width:448px;height:22px;background:#fff;border:1px solid #d5d5d5"></div>
<div class="t" style="left:533.05px;top:84.5px;color:#3c3c3c;letter-spacing:0.0px;font-size:11px;transform:scaleX(0.9543);transform-origin:0 0;">Übersicht</div>
<svg style="left:966.5px;top:90px" width="5" height="3" viewBox="0 0 5 3"><path d="M0 0 H5 L2.5 2.5Z" fill="#444"/></svg>
<div style="position:absolute;left:986px;top:81px;width:23px;height:20px;background:#fff;border:1px solid #adadad"></div>
<div class="t" style="left:992.5px;top:84px;color:#3c3c3c;letter-spacing:0px;font-size:11px;">...</div>
<div style="position:absolute;left:401px;top:118px;width:607px;height:221px;background:#fff"></div>
<div style="position:absolute;left:401px;top:118px;width:304px;height:20px;background:#cbcbcb;border:1px solid #bdbdbd"></div>
<div style="position:absolute;left:705px;top:118px;width:303px;height:19px;background:#e5e5e5"></div>
<div style="position:absolute;left:401px;top:137px;width:304px;height:2px;background:#a8a8a8"></div>
<div style="position:absolute;left:705px;top:137px;width:303px;height:1px;background:#a8a8a8"></div>
<div class="t" style="left:404.86px;top:121px;color:#3c3c3c;letter-spacing:0.0px;font-size:11px;transform:scaleX(0.9368);transform-origin:0 0;">Eigenschaft</div>
<div class="t" style="left:709.2px;top:121px;color:#3c3c3c;letter-spacing:0.0px;font-size:11px;transform:scaleX(0.9587);transform-origin:0 0;">Wert</div>
<div style="position:absolute;left:704px;top:138px;width:1px;height:201px;background:#e3e3e3"></div>
<div style="position:absolute;left:401px;top:138px;width:303px;height:16.5px;border:2px solid #a0a0a0;background:#fff"></div>
<div class="t" style="left:404.2px;top:139px;color:#3c3c3c;letter-spacing:0.0px;font-size:11px;transform:scaleX(0.9873);transform-origin:0 0;">Artikelnummer</div>
<div class="t" style="left:706.81px;top:139px;color:#3c3c3c;letter-spacing:0.0px;font-size:11px;transform:scaleX(0.8864);transform-origin:0 0;">PXC.1110984</div>
<div class="t" style="left:403.26px;top:156px;color:#3c3c3c;letter-spacing:0.0px;font-size:11px;transform:scaleX(0.9382);transform-origin:0 0;">ERP-Nummer</div>
<div class="t" style="left:404.2px;top:173px;color:#3c3c3c;letter-spacing:0.0px;font-size:11px;transform:scaleX(0.9358);transform-origin:0 0;">Artikel: Bezeichnung 1</div>
<div class="t" style="left:706.97px;top:173px;color:#3c3c3c;letter-spacing:0.0px;font-size:11px;transform:scaleX(0.9295);transform-origin:0 0;">Elektronischer Geräteschutzschalter</div>
<div class="t" style="left:404.2px;top:189px;color:#3c3c3c;letter-spacing:0.0px;font-size:11px;transform:scaleX(0.9413);transform-origin:0 0;">Artikel: Bezeichnung 2</div>
<div class="t" style="left:404.2px;top:206px;color:#3c3c3c;letter-spacing:0.0px;font-size:11px;transform:scaleX(0.9413);transform-origin:0 0;">Artikel: Bezeichnung 3</div>
<div class="t" style="left:403.25px;top:223px;color:#3c3c3c;letter-spacing:0.0px;font-size:11px;transform:scaleX(0.953);transform-origin:0 0;">Beschreibung</div>
<div class="t" style="left:708.0px;top:223px;color:#3c3c3c;letter-spacing:0.0px;font-size:11px;transform:scaleX(0.9371);transform-origin:0 0;">Zweikanalige, elektronische Sicherung zum Schutz von Verbra...</div>
<div class="t" style="left:404.2px;top:240px;color:#3c3c3c;letter-spacing:0.0px;font-size:11px;transform:scaleX(0.9537);transform-origin:0 0;">Schaltplanmakro</div>
<div class="t" style="left:706.79px;top:240px;color:#3c3c3c;letter-spacing:0.0px;font-size:11px;transform:scaleX(0.9121);transform-origin:0 0;">PXC\1110984.ema</div>
<div class="t" style="left:404.2px;top:256px;color:#3c3c3c;letter-spacing:0.0px;font-size:11px;transform:scaleX(0.9467);transform-origin:0 0;">Grafikmakro</div>
<div class="t" style="left:707.7px;top:256px;color:#3c3c3c;letter-spacing:0.0px;font-size:11px;transform:scaleX(0.906);transform-origin:0 0;">$(MD_MACROS)\PXC\1110984_3D.ema</div>
<div class="t" style="left:403.3px;top:273px;color:#3c3c3c;letter-spacing:0.0px;font-size:11px;transform:scaleX(0.9);transform-origin:0 0;">Ersteller</div>
<div class="t" style="left:706.86px;top:273px;color:#3c3c3c;letter-spacing:0.0px;font-size:11px;transform:scaleX(0.8381);transform-origin:0 0;">EDP</div>
<div class="t" style="left:403.24px;top:290px;color:#3c3c3c;letter-spacing:0.0px;font-size:11px;transform:scaleX(0.9571);transform-origin:0 0;">Erstellungsdatum</div>
<div class="t" style="left:706.83px;top:290px;color:#3c3c3c;letter-spacing:0.0px;font-size:11px;transform:scaleX(0.873);transform-origin:0 0;">13.10.2021 15:32:20</div>
<div class="t" style="left:404.2px;top:307px;color:#3c3c3c;letter-spacing:0.0px;font-size:11px;transform:scaleX(0.9783);transform-origin:0 0;">Änderungsdatum</div>
<div class="t" style="left:706.83px;top:307px;color:#3c3c3c;letter-spacing:0.0px;font-size:11px;transform:scaleX(0.873);transform-origin:0 0;">13.10.2021 15:32:20</div>
<div class="t" style="left:403.28px;top:323px;color:#3c3c3c;letter-spacing:0.0px;font-size:11px;transform:scaleX(0.9172);transform-origin:0 0;">Letzter Bearbeiter</div>
<div class="t" style="left:706.86px;top:323px;color:#3c3c3c;letter-spacing:0.0px;font-size:11px;transform:scaleX(0.8381);transform-origin:0 0;">EDP</div>
<div style="position:absolute;left:401px;top:339px;width:607px;height:106px;background:#e3e3e3"></div>
<div style="position:absolute;left:384px;top:451px;width:640px;height:5px;background:linear-gradient(to bottom,#d9d9d9,#c9c9c9 35%,#c9c9c9 65%,#d9d9d9)"></div>
<div style="position:absolute;left:401px;top:462px;width:607px;height:183px;background:#fff;border:2px solid #9c9c9c"></div>
<div style="position:absolute;left:918px;top:675px;width:109px;height:23px;background:#fbfbfb;border:1px solid #c8c8c8"></div>
<div class="t" style="left:941.23px;top:679px;color:#a6a6a6;letter-spacing:0.0px;font-size:11px;transform:scaleX(0.9677);transform-origin:0 0;">Übernehmen</div>
<div style="position:absolute;left:672px;top:461px;width:245px;height:237px;background:#fbfbfb;border:1px solid #b4b4b4;box-shadow:2px 2px 2px rgba(0,0,0,0.25)"></div>
<div class="t" style="left:698.22px;top:464px;color:#3c3c3c;letter-spacing:0.0px;font-size:11px;transform:scaleX(0.9841);transform-origin:0 0;">Importieren...</div>
<div class="t" style="left:698.26px;top:483.5px;color:#3c3c3c;letter-spacing:0.0px;font-size:11px;transform:scaleX(0.9375);transform-origin:0 0;">Exportieren...</div>
<div class="t" style="left:698.26px;top:503px;color:#3c3c3c;letter-spacing:0.0px;font-size:11px;transform:scaleX(0.9439);transform-origin:0 0;">Eigenschaften extern bearbeiten</div>
<div class="t" style="left:698.26px;top:529.5px;color:#3c3c3c;letter-spacing:0.0px;font-size:11px;transform:scaleX(0.9426);transform-origin:0 0;">Übersetzung</div>
<div class="t" style="left:698.25px;top:549px;color:#3c3c3c;letter-spacing:0.0px;font-size:11px;transform:scaleX(0.9469);transform-origin:0 0;">Funktionsschablonen zusammenfassen</div>
<div class="t" style="left:698.25px;top:568.5px;color:#3c3c3c;letter-spacing:0.0px;font-size:11px;transform:scaleX(0.9506);transform-origin:0 0;">Funktionsschablonen zuweisen...</div>
<div class="t" style="left:698.24px;top:594.8px;color:#3c3c3c;letter-spacing:0.0px;font-size:11px;transform:scaleX(0.9562);transform-origin:0 0;">Eigenschaften konfigurieren...</div>
<div class="t" style="left:698.26px;top:614.3px;color:#3c3c3c;letter-spacing:0.0px;font-size:11px;transform:scaleX(0.9405);transform-origin:0 0;">Einstellungen...</div>
<div style="position:absolute;left:674px;top:638px;width:239px;height:19px;background:#cacaca"></div>
<div class="t" style="left:699.2px;top:640.5px;color:#3c3c3c;letter-spacing:0.0px;font-size:11px;transform:scaleX(0.9294);transform-origin:0 0;">Alle Artikel in eSTOCK hochladen</div>
<div class="t" style="left:698.29px;top:660px;color:#a9a9a9;letter-spacing:0.0px;font-size:11px;transform:scaleX(0.9135);transform-origin:0 0;">Mit Daten aus eSTOCK aktualisieren</div>
<div class="t" style="left:699.2px;top:679.5px;color:#a9a9a9;letter-spacing:0.0px;font-size:11px;transform:scaleX(0.932);transform-origin:0 0;">Auf Änderungen in eSTOCK prüfen</div>
<div style="position:absolute;left:700px;top:524px;width:212px;height:1px;background:#dadada"></div>
<div style="position:absolute;left:700px;top:589px;width:212px;height:1px;background:#dadada"></div>
<div style="position:absolute;left:700px;top:634.5px;width:212px;height:1px;background:#dadada"></div>
<svg style="left:908px;top:506px" width="5" height="8" viewBox="0 0 5 8"><path d="M0.5 0.5 L4.5 4 L0.5 7.5 Z" fill="#333"/></svg>
<svg style="left:908px;top:533px" width="5" height="8" viewBox="0 0 5 8"><path d="M0.5 0.5 L4.5 4 L0.5 7.5 Z" fill="#333"/></svg>
<div style="position:absolute;left:0px;top:719px;width:1043px;height:1px;background:#f8f6f3"></div>
<div style="position:absolute;left:0px;top:720px;width:1043px;height:1px;background:#a9c4e6"></div>
</body></html>
